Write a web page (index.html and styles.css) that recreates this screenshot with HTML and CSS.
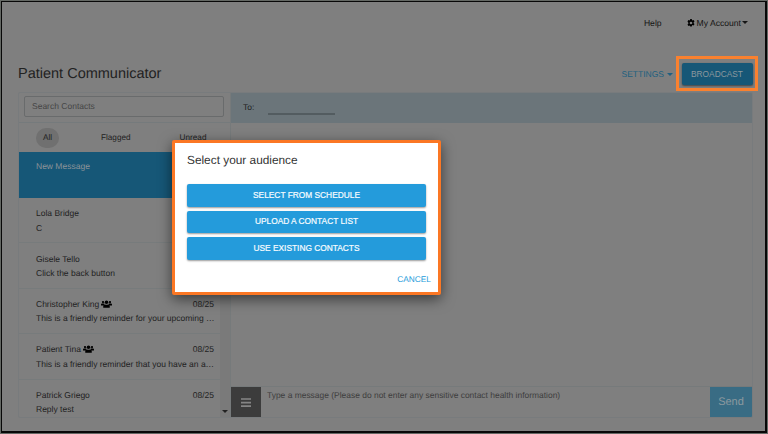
FILE: index.html
```
<!DOCTYPE html>
<html lang="en">
<head>
<meta charset="utf-8">
<title>Patient Communicator</title>
<link rel="stylesheet" href="styles.css">
</head>
<body>
<svg width="0" height="0" class="defs" aria-hidden="true">
  <symbol id="group" viewBox="0 0 22 16">
    <circle cx="4" cy="4.2" r="2.3"/><circle cx="18" cy="4.2" r="2.3"/><circle cx="11" cy="4.5" r="3.6"/>
    <path d="M0 11V9.2Q0 7.2 2 7.2H6Q7 7.2 7.5 8Q5.300 9 5 11ZM22 11V9.200Q22 7.200 20 7.200H16Q15 7.200 14.500 8Q16.700 9 17 11ZM4.500 15.500V12.500Q4.500 9 8 9Q11 10.200 14 9Q17.500 9 17.500 12.500V15.500Z"/>
  </symbol>
</svg>
<div class="page">
  <nav class="topnav">
    <span>Help</span>
    <span class="account">
      <svg class="gear" viewBox="0 0 16 16"><path fill-rule="evenodd" d="M6.500 0h3l.5 2.200 1.300.7 2.100-.8 1.600 2.700-1.700 1.600v2.200l1.700 1.600-1.600 2.700-2.100-.8-1.300.7-.5 2.200h-3L6 13.800l-1.300-.7-2.100.8L1 11.200l1.700-1.600V7.400L1 4.800l1.600-2.700 2.100.8L6 2.200ZM8 5.300a2.700 2.700 0 1 0 0 5.400 2.700 2.700 0 0 0 0-5.400Z"/></svg>
      <span>My Account</span><i class="caret"></i>
    </span>
  </nav>
  <header class="heading">
    <h1>Patient Communicator</h1>
    <span class="settings">SETTINGS<i class="caret"></i></span>
    <div class="highlight"><button class="broadcast">BROADCAST</button></div>
  </header>
  <main class="panel">
    <aside class="sidebar">
      <div class="search"><div class="field">Search Contacts</div></div>
      <div class="filters"><span class="all">All</span><span class="flagged">Flagged</span><span class="unread">Unread</span></div>
      <div class="contacts">
        <div class="list">
          <div class="item new"><div class="row">New Message</div></div>
          <div class="item"><div class="row">Lola Bridge</div><p>C</p></div>
          <div class="item"><div class="row">Gisele Tello</div><p>Click the back button</p></div>
          <div class="item"><div class="row"><span>Christopher King</span><svg class="group"><use href="#group"/></svg><time>08/25</time></div><p>This is a friendly reminder for your upcoming …</p></div>
          <div class="item"><div class="row"><span>Patient Tina</span><svg class="group"><use href="#group"/></svg><time>08/25</time></div><p>This is a friendly reminder that you have an a…</p></div>
          <div class="item"><div class="row"><span>Patrick Griego</span><time>08/25</time></div><p>Reply test</p></div>
        </div>
        <div class="scrollbar"><i class="caret"></i></div>
      </div>
    </aside>
    <section class="chat">
      <div class="to"><span>To:</span><i class="line"></i></div>
      <div class="messages"></div>
      <div class="composer">
        <div class="menu"><svg viewBox="0 0 10 9"><path d="M0 .2h10v1.600H0zM0 3.800h10v1.600H0zM0 7.300h10v1.600H0z"/></svg></div>
        <div class="input">Type a message (Please do not enter any sensitive contact health information)</div>
        <div class="send">Send</div>
      </div>
    </section>
  </main>
</div>
<div class="dialog">
  <h2>Select your audience</h2>
  <div class="actions">
    <button>SELECT FROM SCHEDULE</button>
    <button>UPLOAD A CONTACT LIST</button>
    <button>USE EXISTING CONTACTS</button>
  </div>
  <span class="cancel">CANCEL</span>
</div>
</body>
</html>
```
FILE: styles.css
```
* { box-sizing: border-box; }
body { margin: 0; height: 434px; overflow: hidden; padding: 1px; background: #646864; font: 8.500px/12px "Liberation Sans", Arial, sans-serif; color: #222; text-rendering: geometricPrecision; }
h1, h2, p { margin: 0; font-weight: 400; }
button { border: 0; padding: 0; font-family: inherit; }
.defs { position: absolute; }
.page { height: 432px; width: 766px; border: 2px solid #080808; border-left-width: 1px; border-top-width: 1px; background: #7f7f7f; padding: 0 12px 0 16px; }
.topnav { height: 41px; padding: 0 5px 0 0; display: flex; justify-content: flex-end; align-items: center; gap: 25px; font-size: 8.600px; color: #151515; }
.account { display: flex; align-items: center; }
.gear { width: 8px; height: 8px; margin-right: 2px; }
.caret { width: 0; height: 0; border: 2.500px solid transparent; border-width: 3px 3px 0; border-top-color: currentColor; margin-left: 1px; }
.heading { height: 49px; display: flex; align-items: center; padding-top: 13px; }
h1 { flex: 1; font-size: 14.500px; line-height: 18px; color: #222; margin-top: -1px; }
.settings { display: flex; align-items: center; font-size: 8.500px; color: #205f80; margin-right: 3px; }
.settings .caret { margin-left: 3px; }
.highlight { width: 82px; height: 35px; border: 3px solid #fa812f; padding: 4px 2px; margin: -1px -5px 0 0; }
.broadcast { display: block; width: 71px; height: 22px; border-radius: 2px; background: #165777; color: #8c989e; font-size: 8.350px; box-shadow: 0 1px 2px #444; margin: 0 auto; padding-bottom: 1px; }
.panel { height: 326px; width: 735px; display: flex; border: 1px solid #787b7d; border-radius: 2px; overflow: hidden; }
.sidebar { width: 212px; border-right: 1px solid #767a7b; display: flex; flex-direction: column; }
.search { height: 30px; padding: 3px 6px 0 5px; border-bottom: 1px solid #757a7c; }
.field { height: 21px; border: 1px solid #696b6c; border-radius: 2px; padding: 0 7px; line-height: 19px; color: #464646; }
.filters { height: 29px; display: flex; align-items: center; font-size: 8.200px; }
.all { width: 23px; height: 20px; border-radius: 10px; background: #707070; text-align: center; line-height: 20px; margin-left: 17px; }
.flagged { margin-left: 42px; }
.unread { margin-left: 49px; }
.contacts { flex: 1; min-height: 0; display: flex; overflow: hidden; }
.list { width: 201px; }
.item { height: 45.400px; padding: 8px 6px 0 17px; border-bottom: 1px solid #777b7c; }
.item.new { width: 212px; height: 46px; background: #165777; color: #8c9397; padding-top: 7px; border: 0; }
.row { display: flex; align-items: center; height: 14.500px; white-space: nowrap; }
.row time { margin-left: auto; }
.item p { line-height: 15px; white-space: nowrap; }
.group { width: 11px; height: 8px; margin-left: 2px; }
.scrollbar { width: 10px; background: #7a7a7a; display: flex; flex-direction: column; justify-content: flex-end; padding: 0 0 4px 2px; position: relative; z-index: -1; }
.page, .contacts { isolation: isolate; }
.scrollbar .caret { margin-left: 0; }
.chat { flex: 1; display: flex; flex-direction: column; }
.to { height: 30px; background: #6b757a; display: flex; align-items: center; padding: 0 0 2px 12px; }
.line { width: 67px; height: 1.500px; background: #535c60; margin: 14px 0 0 14px; }
.messages { flex: 1; border-bottom: 1px solid #767a7b; }
.composer { height: 30px; display: flex; }
.menu { width: 30px; background: #3c3c3c; display: grid; place-items: center; }
.menu svg { width: 10px; height: 9px; fill: #858585; }
.input { flex: 1; padding: 2px 6px; color: #3e3e3e; font-size: 8.450px; }
.send { width: 42px; background: #396c84; color: #8b999f; text-align: center; font-size: 11px; line-height: 30px; }
.dialog { position: absolute; left: 172px; top: 140px; width: 269px; height: 155px; border: 3px solid #fb7724; background: #fff; padding: 9px 12px 8px; box-shadow: 0 4px 14px rgba(0,0,0,.55); display: flex; flex-direction: column; border-radius: 2px; }
h2 { font-size: 11.850px; line-height: 16px; color: #333; }
.actions { margin-top: 16px; display: grid; gap: 4px; }
.actions button { height: 22.500px; border-radius: 2px; background: #249bdb; color: #f7fcff; font-size: 8.350px; -webkit-text-stroke: .2px #f7fcff; box-shadow: 0 1px 2px rgba(0,0,0,.4); padding-bottom: 1px; }
.cancel { align-self: flex-end; margin: 13px -5px 0 0; color: #249bdb; font-size: 8.300px; }
```
